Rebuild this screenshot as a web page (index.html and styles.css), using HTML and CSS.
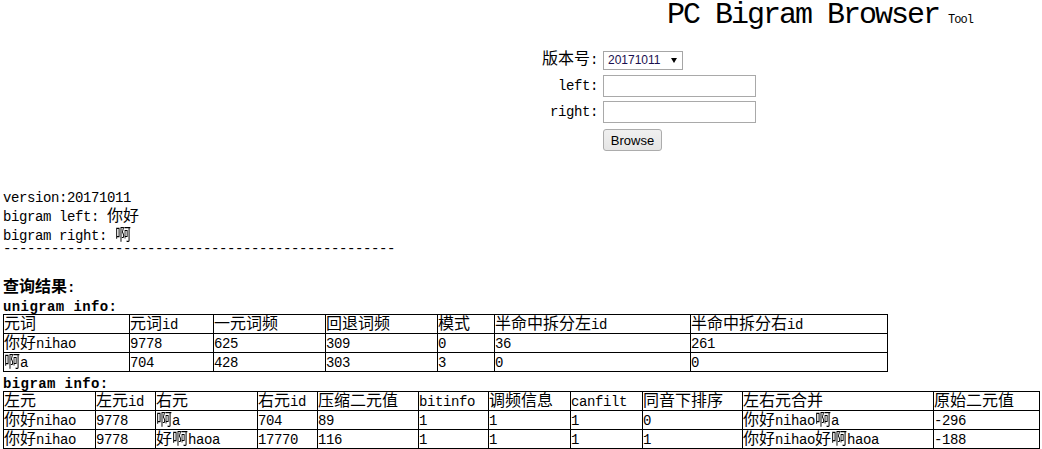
FILE: index.html
```html
<!DOCTYPE html>
<html lang="zh-CN">
<head>
<meta charset="utf-8">
<title>PC Bigram Browser</title>
<link rel="stylesheet" href="styles.css">
</head>
<body>
<div class="page">
  <header class="masthead">
    <span class="title">PC Bigram Browser</span><span class="tool">Tool</span>
  </header>

  <form class="query">
    <label class="lbl"><span class="zh">版本号</span>:</label>
    <span class="select-wrap"><select class="ver"><option>20171011</option></select></span>
    <label class="lbl">left:</label>
    <input class="field" type="text">
    <label class="lbl">right:</label>
    <input class="field" type="text">
    <span class="lbl"></span>
    <span class="btn-cell"><button class="btn" type="button">Browse</button></span>
  </form>

  <div class="info">
    <div>version:20171011</div>
    <div>bigram left: <span class="zh">你好</span></div>
    <div>bigram right: <span class="zh ink">啊</span></div>
  </div>
  <div class="rule">-------------------------------------------------</div>

  <div class="result-title"><span class="zh">查询结果</span>:</div>
  <div class="sect">unigram info:</div>
  <table class="grid uni">
    <colgroup><col><col><col><col><col><col><col></colgroup>
    <tr><td><span class="zh">元词</span></td><td><span class="zh">元词</span>id</td><td><span class="zh">一元词频</span></td><td><span class="zh">回退词频</span></td><td><span class="zh">模式</span></td><td><span class="zh">半命中拆分左</span>id</td><td><span class="zh">半命中拆分右</span>id</td></tr>
    <tr><td><span class="zh">你好</span>nihao</td><td>9778</td><td>625</td><td>309</td><td>0</td><td>36</td><td>261</td></tr>
    <tr><td><span class="zh ink">啊</span>a</td><td>704</td><td>428</td><td>303</td><td>3</td><td>0</td><td>0</td></tr>
  </table>

  <div class="sect sect-bi">bigram info:</div>
  <table class="grid bi">
    <colgroup><col><col><col><col><col><col><col><col><col><col><col></colgroup>
    <tr><td><span class="zh">左元</span></td><td><span class="zh">左元</span>id</td><td><span class="zh">右元</span></td><td><span class="zh">右元</span>id</td><td><span class="zh">压缩二元值</span></td><td>bitinfo</td><td><span class="zh">调频信息</span></td><td>canfilt</td><td><span class="zh">同音下排序</span></td><td><span class="zh">左右元合并</span></td><td><span class="zh">原始二元值</span></td></tr>
    <tr><td><span class="zh">你好</span>nihao</td><td>9778</td><td><span class="zh ink">啊</span>a</td><td>704</td><td>89</td><td>1</td><td>1</td><td>1</td><td>0</td><td><span class="zh">你好</span>nihao<span class="zh ink">啊</span>a</td><td>-296</td></tr>
    <tr><td><span class="zh">你好</span>nihao</td><td>9778</td><td><span class="zh">好</span><span class="zh ink">啊</span>haoa</td><td>17770</td><td>116</td><td>1</td><td>1</td><td>1</td><td>1</td><td><span class="zh">你好</span>nihao<span class="zh">好</span><span class="zh ink">啊</span>haoa</td><td>-188</td></tr>
  </table>
</div>
</body>
</html>
```

FILE: styles.css
```css
html, body {
  margin: 0;
  padding: 0;
  background: #fff;
}

body {
  font-family: "Liberation Mono", "Noto Sans CJK SC", monospace;
  font-size: 14px;
  letter-spacing: -0.4px;
  color: #000;
}

.zh {
  font-family: "Noto Sans CJK SC", "Noto Sans CJK JP", "Noto Sans CJK TC", "Noto Sans CJK KR", sans-serif;
  font-size: 16px;
  letter-spacing: 0;
  line-height: 0;
  font-weight: normal;
}

.ink {
  display: inline-block;
  filter: grayscale(1) brightness(0);
}

/* ---------- title ---------- */
.masthead {
  padding-left: 667px;
  height: 30px;
  line-height: 30px;
  white-space: nowrap;
}

.title {
  font-size: 30px;
  letter-spacing: -2px;
}

.tool {
  font-size: 12px;
  letter-spacing: -1px;
  margin-left: 9px;
}

/* ---------- query form ---------- */
.query {
  display: grid;
  grid-template-columns: 56px auto;
  grid-auto-rows: 22px;
  column-gap: 5px;
  row-gap: 4px;
  justify-content: start;
  align-items: center;
  margin: 19px 0 0 0;
  padding-left: 542px;
}

.lbl {
  text-align: right;
  line-height: 22px;
  white-space: nowrap;
}

.select-wrap {
  position: relative;
  display: block;
  width: 80px;
  height: 19px;
}

.select-wrap::after {
  content: "";
  position: absolute;
  right: 6px;
  top: 7px;
  width: 0;
  height: 0;
  border-left: 3px solid transparent;
  border-right: 3px solid transparent;
  border-top: 5px solid #000;
  pointer-events: none;
}

.ver {
  -webkit-appearance: none;
  appearance: none;
  box-sizing: border-box;
  width: 80px;
  height: 19px;
  margin: 0;
  padding: 0 0 0 4px;
  border: 1px solid #a6a6a6;
  border-radius: 0;
  background: #fff;
  color: #1a1050;
  font-family: "Liberation Sans", Arial, sans-serif;
  font-size: 12px;
  letter-spacing: 0;
  line-height: 17px;
}

.field {
  box-sizing: border-box;
  width: 153px;
  height: 22px;
  margin: 0;
  padding: 1px 2px;
  border: 1px solid #a9a9a9;
  background: #fff;
  font-family: "Liberation Sans", Arial, sans-serif;
  font-size: 13px;
}

.btn-cell {
  display: block;
  padding-top: 4px;
}

.btn {
  box-sizing: border-box;
  width: 59px;
  height: 22px;
  margin: 0;
  padding: 0;
  border: 1px solid #acacac;
  border-radius: 3px;
  background: linear-gradient(#f0f0f0, #e5e5e5);
  color: #000;
  font-family: "Liberation Sans", Arial, sans-serif;
  font-size: 13px;
  letter-spacing: 0;
}

/* ---------- info text ---------- */
.info {
  margin-top: 40px;
  padding-left: 3px;
  line-height: 19px;
}

.rule {
  margin-top: -6px;
  padding-left: 3px;
  line-height: 19px;
  white-space: nowrap;
}

.result-title {
  margin-top: 19px;
  padding-left: 3px;
  line-height: 20px;
  font-weight: bold;
}

.result-title .zh {
  font-weight: bold;
}

.sect {
  margin-top: 2px;
  padding-left: 3px;
  line-height: 14px;
  font-weight: bold;
  letter-spacing: 0.4px;
}

.sect-bi {
  margin-top: 5px;
}

/* ---------- tables ---------- */
.grid {
  border-collapse: collapse;
  table-layout: fixed;
  margin-left: 3px;
}

.grid td {
  border: 1px solid #000;
  padding: 3px 0 0 0;
  height: 15px;
  line-height: 15px;
  white-space: nowrap;
  vertical-align: top;
  text-align: left;
}

.uni { width: 885px; }
.uni col:nth-child(1) { width: 126px; }
.uni col:nth-child(2) { width: 84px; }
.uni col:nth-child(3) { width: 112px; }
.uni col:nth-child(4) { width: 112px; }
.uni col:nth-child(5) { width: 57px; }
.uni col:nth-child(6) { width: 196px; }
.uni col:nth-child(7) { width: 197px; }

.bi { width: 1037px; }
.bi col:nth-child(1) { width: 92px; }
.bi col:nth-child(2) { width: 60px; }
.bi col:nth-child(3) { width: 102px; }
.bi col:nth-child(4) { width: 60px; }
.bi col:nth-child(5) { width: 101px; }
.bi col:nth-child(6) { width: 70px; }
.bi col:nth-child(7) { width: 82px; }
.bi col:nth-child(8) { width: 72px; }
.bi col:nth-child(9) { width: 100px; }
.bi col:nth-child(10) { width: 191px; }
.bi col:nth-child(11) { width: 106px; }
```
